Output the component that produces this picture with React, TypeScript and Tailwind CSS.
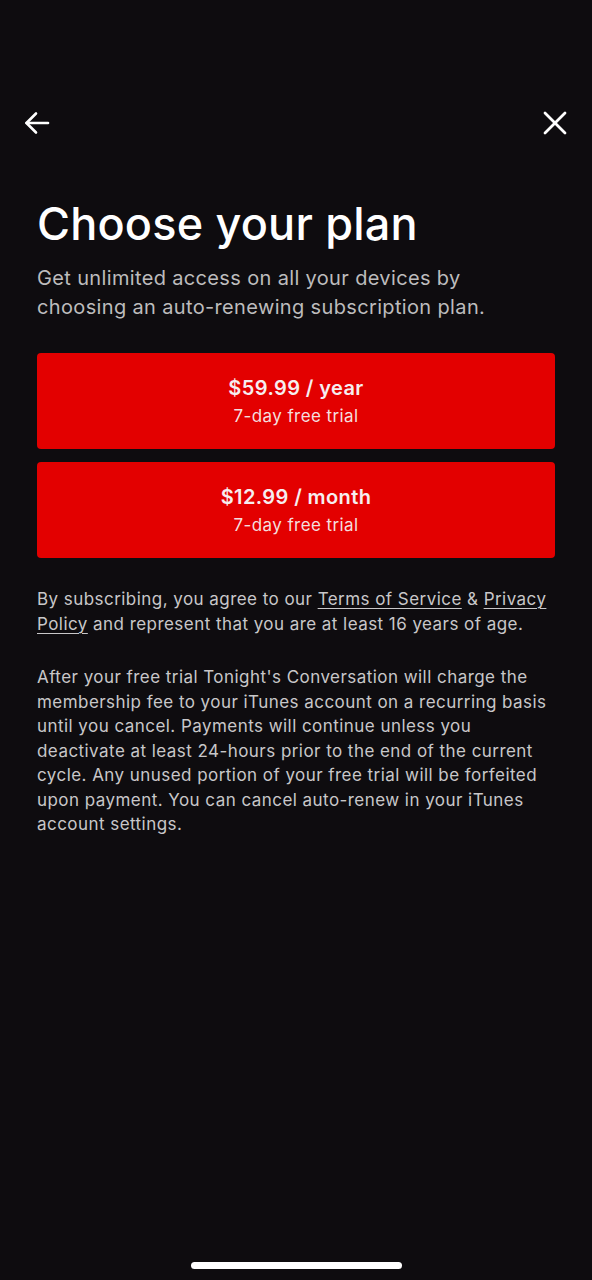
import React from 'react';

const plans = [
  { price: '$59.99 / year', trial: '7-day free trial' },
  { price: '$12.99 / month', trial: '7-day free trial' },
];

const App: React.FC = () => {
  return (
    <div
      className="relative w-[592px] h-[1280px] bg-[#0e0c0f] text-white overflow-hidden"
      style={{ fontFamily: 'Inter, "Noto Sans", sans-serif' }}
    >
      <div className="flex items-center justify-between px-[24px] pt-[110px]">
        <button aria-label="Back" className="w-[26px] h-[26px] flex items-center justify-center">
          <svg width="26" height="26" viewBox="0 0 26 26" fill="none" stroke="white" strokeWidth="2.6" strokeLinecap="round" strokeLinejoin="round">
            <path d="M24 13H2.5" />
            <path d="M12 3.5L2.5 13L12 22.5" />
          </svg>
        </button>
        <button aria-label="Close" className="w-[26px] h-[26px] flex items-center justify-center">
          <svg width="24" height="24" viewBox="0 0 24 24" fill="none" stroke="white" strokeWidth="2.8" strokeLinecap="round">
            <path d="M2 2L22 22" />
            <path d="M22 2L2 22" />
          </svg>
        </button>
      </div>

      <div className="px-[37px] pt-[60px]">
        <h1 className="text-[45px] leading-[56px] font-medium tracking-[0.2px]">Choose your plan</h1>
        <p className="mt-[12px] text-[20px] leading-[29px] tracking-[0.35px] text-[#bdbcbd] pr-[30px]">
          Get unlimited access on all your devices by choosing an auto-renewing subscription plan.
        </p>

        <div className="mt-[31px] flex flex-col gap-[13px]">
          {plans.map((plan) => (
            <button
              key={plan.price}
              className="w-full h-[96px] rounded-[4px] bg-[#e30000] flex flex-col items-center justify-center"
            >
              <span className="text-[20px] leading-[26px] font-semibold tracking-[0.4px] text-[#f6eef0]">{plan.price}</span>
              <span className="text-[17px] leading-[24px] tracking-[0.4px] text-[#f4dede] mt-[3px]">{plan.trial}</span>
            </button>
          ))}
        </div>

        <p className="mt-[29px] text-[17px] leading-[25px] tracking-[0.45px] text-[#c8c7c9]">
          By subscribing, you agree to our{' '}
          <span className="underline underline-offset-[3px] decoration-1">Terms of Service</span> &amp;{' '}
          <span className="underline underline-offset-[3px] decoration-1">Privacy Policy</span> and represent that you
          are at least 16 years of age.
        </p>

        <p className="mt-[28px] text-[17px] leading-[24.5px] tracking-[0.45px] text-[#c8c7c9]">
          After your free trial Tonight's Conversation will charge the membership fee to your iTunes account on a
          recurring basis until you cancel. Payments will continue unless you deactivate at least 24-hours prior to the
          end of the current cycle. Any unused portion of your free trial will be forfeited upon payment. You can cancel
          auto-renew in your iTunes account settings.
        </p>
      </div>

      <div className="absolute bottom-[11px] left-[191px] w-[211px] h-[7px] rounded-full bg-white" />
    </div>
  );
};

export default App;
